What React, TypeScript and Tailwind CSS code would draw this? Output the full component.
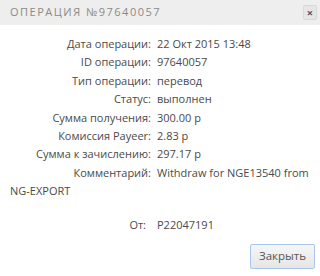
import React from "react";

const ROWS: [string, string][] = [
  ["Дата операции:", "22 Окт 2015 13:48"],
  ["ID операции:", "97640057"],
  ["Тип операции:", "перевод"],
  ["Статус:", "выполнен"],
  ["Сумма получения:", "300.00 р"],
  ["Комиссия Payeer:", "2.83 р"],
  ["Сумма к зачислению:", "297.17 р"],
  ["Комментарий:", "Withdraw for NGE13540 from"],
];

export default function App() {
  return (
    <div className="w-[320px] h-[276px] bg-white text-[#4a4a4a] text-[11px] font-['Open_Sans',sans-serif] overflow-hidden">
      {/* шапка */}
      <div className="h-[25px] bg-[#eeeeee] flex items-center justify-between pl-[10px] pr-[3px]">
        <span className="uppercase tracking-[1.5px] text-[#8a8a8a] font-medium text-[11px]">Операция №97640057</span>
        <button className="w-[14px] h-[15px] bg-[#e6e6e6] border border-[#d8d8d8] rounded-[2px] flex items-center justify-center text-[#555] text-[11px] font-bold leading-none">
          ×
        </button>
      </div>

      <div className="px-[10px] pt-[10px]">
        {ROWS.map(([label, value]) => (
          <div key={label} className="leading-[18.4px]">
            <span className="inline-block w-[141px] text-right mr-[6px]">{label}</span>
            <span>{value}</span>
          </div>
        ))}
        <div className="leading-[18.4px]">NG-EXPORT</div>
        <div className="leading-[18.4px] mt-[15.5px]">
          <span className="inline-block w-[136px] text-right mr-[11px]">От:</span>
          <span>P22047191</span>
        </div>
      </div>

      <div className="flex justify-end pr-[5px] pt-[9px]">
        <button className="w-[65px] h-[25px] rounded-[2px] border border-[#a9c6ec] bg-gradient-to-b from-[#f6f6f6] to-[#e6e6e6] text-[#555] text-[11.5px]">
          Закрыть
        </button>
      </div>
    </div>
  );
}
